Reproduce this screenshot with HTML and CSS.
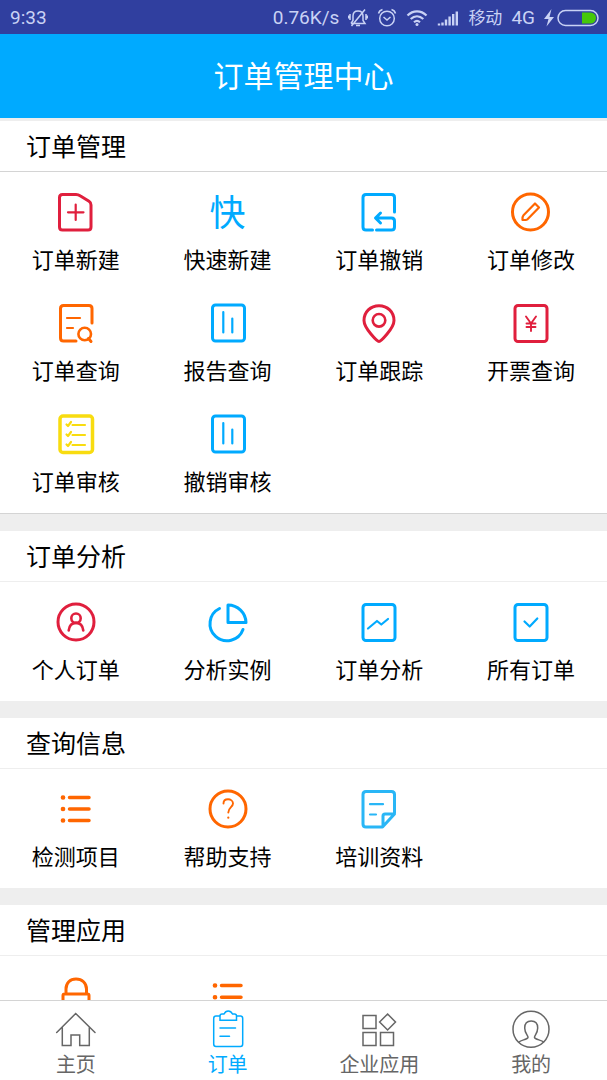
FILE: index.html
```html
<!DOCTYPE html>
<html lang="zh-CN">
<head>
<meta charset="utf-8">
<meta name="viewport" content="width=device-width, initial-scale=1">
<title>订单管理中心</title>
<link rel="stylesheet" href="styles.css">
</head>
<body>
<div class="app">
  <div class="status">
    <span class="status-time">9:33</span>
    <span class="status-speed">0.76K/s</span>
    <svg class="status-icon" width="20" height="20" viewBox="0 0 20 20"><path d="M3 15.500H17L15 12.500V8C15 5 13 3 10 3S5 5 5 8V12.500L3 15.500M8 17.500h4M3.500 18L17 1.500M2 6v6M.7 7.500v3M18 6v6M19.300 7.500v3"/></svg>
    <svg class="status-icon" width="20" height="20" viewBox="0 0 20 20"><circle cx="10" cy="10.500" r="7.300"/><path d="M6.500 9L10 12L13.500 9M1.500 5.500C2 3.500 3.500 2 5.500 1.500M18.500 5.500C18 3.500 16.500 2 14.500 1.500"/></svg>
    <svg class="status-icon" width="22" height="20" viewBox="0 0 22 20"><path stroke-width="2.200" d="M1.500 7.500C7 2 15 2 20.500 7.500M4.700 11C8.500 7.500 13.500 7.500 17.300 11M8 14.300C9.800 12.700 12.200 12.700 14 14.300"/><circle class="solid" cx="11" cy="16.500" r="1.500"/></svg>
    <svg class="status-icon signal" width="22" height="20" viewBox="0 0 22 20"><path stroke-width="2.400" d="M2 17.500v-2M5.500 17.500v-3M9 17.500v-6M12.600 17.500v-9M16.200 17.500v-11.500M19.800 17.500v-14"/></svg>
    <span class="status-carrier">移动</span>
    <span class="status-net">4G</span>
    <svg class="status-icon bolt" width="10" height="18" viewBox="0 0 10 18"><path class="solid" d="M7.500 0L0 10H4.500L2.500 17.500L10 8H5.500z"/></svg>
    <svg class="status-icon" width="42" height="18" viewBox="0 0 42 18"><rect x="1" y="1.500" width="40" height="15" rx="7.500"/><path class="charge" d="M25 3.500H33.500a5.500 5.500 0 0 1 0 11H25z"/></svg>
  </div>

  <header class="topbar"><h1 class="topbar-title">订单管理中心</h1></header>

  <main class="content">
    <section class="panel panel-first">
      <h2 class="panel-title">订单管理</h2>
      <div class="grid">
        <a class="item" href="#"><svg class="icon red" viewBox="0 0 40 40"><path d="M6.500 2.500H20C22 2.500 23 3 24.500 4L33 9.300C34.500 10.300 35 11.500 35 13V35Q35 38 32 38H6.500Q3.500 38 3.500 35V5.500Q3.500 2.500 6.500 2.500z"/><path class="thin" d="M12 20.300h15.500M19.700 12.500v15.500"/></svg><span class="label">订单新建</span></a>
        <a class="item" href="#"><span class="icon glyph">快</span><span class="label">快速新建</span></a>
        <a class="item" href="#"><svg class="icon blue" viewBox="0 0 40 40"><path d="M35.500 20V5.500Q35.500 2.500 32.500 2.500H7Q4 2.500 4 5.500V35Q4 38 7 38H13.500M17.500 38H32.500Q35.500 38 35.500 35V29Q35.500 26 32.500 26H17M21.500 21L16.500 26L21.500 31"/></svg><span class="label">订单撤销</span></a>
        <a class="item" href="#"><svg class="icon orange" viewBox="0 0 40 40"><circle cx="19.500" cy="20" r="18"/><path class="thin" d="M24 11.500L28 15.500L16.500 27.300Q15.500 28 11.500 28Q11.300 24.500 12.500 23.300z"/></svg><span class="label">订单修改</span></a>
        <a class="item" href="#"><svg class="icon orange" viewBox="0 0 40 40"><path d="M36 20V5.500Q36 2.500 33 2.500H7.500Q4.500 2.500 4.500 5.500V35Q4.500 38 7.500 38H20"/><path class="thin" d="M11 15h13M11 25h6"/><circle class="mid" cx="28.700" cy="31" r="6.300"/><path d="M32.500 35.500L35 38.500"/></svg><span class="label">订单查询</span></a>
        <a class="item" href="#"><svg class="icon blue" viewBox="0 0 40 40"><rect x="4.500" y="2" width="32" height="36" rx="3"/><path class="thin" d="M15.300 9v20.500M24.300 15.500v14"/></svg><span class="label">报告查询</span></a>
        <a class="item" href="#"><svg class="icon red" viewBox="0 0 40 40"><path d="M20 38.500C18.500 38.500 5 25.500 5 17.500C5 9 11.500 2.700 20 2.700S35 9 35 17.500C35 25.500 21.500 38.500 20 38.500z"/><circle class="mid" cx="20" cy="17.300" r="6.300"/></svg><span class="label">订单跟踪</span></a>
        <a class="item" href="#"><svg class="icon red" viewBox="0 0 40 40"><rect x="4" y="2.500" width="32" height="36" rx="3"/><path class="fine" d="M15 13.500L20 20.500L25 13.500M20 20.500V28M15.500 20.500h9M15.500 24h9"/></svg><span class="label">开票查询</span></a>
        <a class="item" href="#"><svg class="icon yellow" viewBox="0 0 40 40"><rect class="thick" x="4" y="2" width="32.500" height="36.500" rx="3"/><path class="thin" d="M16.500 11h12.500M16.500 21h12.500M16.500 31h12.500M10.500 10.500L12 12L15 8M10.500 20.500L12 22L15 18M10.500 30.500L12 32L15 28"/></svg><span class="label">订单审核</span></a>
        <a class="item" href="#"><svg class="icon blue" viewBox="0 0 40 40"><rect x="4.500" y="2" width="32" height="36" rx="3"/><path class="thin" d="M15.300 9v20.500M24.300 15.500v14"/></svg><span class="label">撤销审核</span></a>
      </div>
    </section>

    <section class="panel">
      <h2 class="panel-title">订单分析</h2>
      <div class="grid">
        <a class="item" href="#"><svg class="icon red" viewBox="0 0 40 40"><circle cx="20" cy="20" r="18"/><circle class="mid" cx="20" cy="16.200" r="4.700"/><path class="mid" d="M12.700 28.500C13.300 23.500 16 20.900 20 20.900S26.700 23.500 27.300 28.500"/></svg><span class="label">个人订单</span></a>
        <a class="item" href="#"><svg class="icon blue" viewBox="0 0 40 40"><path d="M20 3A18 18 0 0 1 38 20.500H20zM11.500 6.500A17 17 0 1 0 35 27.500"/></svg><span class="label">分析实例</span></a>
        <a class="item" href="#"><svg class="icon blue" viewBox="0 0 40 40"><rect x="4" y="2.500" width="32" height="36" rx="3"/><path class="thin" d="M9 26.500L18 19L22.300 22.500L29 17"/></svg><span class="label">订单分析</span></a>
        <a class="item" href="#"><svg class="icon blue" viewBox="0 0 40 40"><rect x="4" y="2.500" width="32" height="36" rx="3"/><path class="thin" d="M13.500 19.500L18.700 24.500L26.300 16.500"/></svg><span class="label">所有订单</span></a>
      </div>
    </section>

    <section class="panel">
      <h2 class="panel-title">查询信息</h2>
      <div class="grid">
        <a class="item" href="#"><svg class="icon orange" viewBox="0 0 40 40"><path class="thick" d="M13.500 8.500h19.500M13.500 20h19.500M13.500 31.500h19.500"/><path class="dots" d="M6.900 8.500h.2M6.900 20h.2M6.900 31.500h.2"/></svg><span class="label">检测项目</span></a>
        <a class="item" href="#"><svg class="icon orange" viewBox="0 0 40 40"><circle cx="20" cy="20" r="18"/><path class="fine" d="M15.500 14.500C15.500 11.500 17.500 10.300 20 10.300S25 12 25 14.500C25 18 20.300 18.500 20.300 23.500"/><path class="thin" d="M20.300 28.500v.2"/></svg><span class="label">帮助支持</span></a>
        <a class="item" href="#"><svg class="icon sky" viewBox="0 0 40 40"><path d="M35.500 24V5.500Q35.500 2.500 32.500 2.500H7Q4 2.500 4 5.500V35Q4 38 7 38H23.500L35.500 25H26Q24 25 24 27V37"/><path class="thin" d="M11 15.200h13M11 25.500h6"/></svg><span class="label">培训资料</span></a>
      </div>
    </section>

    <section class="panel">
      <h2 class="panel-title">管理应用</h2>
      <div class="grid">
        <a class="item" href="#"><svg class="icon orange" viewBox="0 0 40 40"><path d="M10 17.500V13C10 7 14 3 20 3S30.500 7 30.500 13V17.500M8.500 18H31.500Q33 18 33 19.500V36.500Q33 38 31.500 38H8.500Q7 38 7 36.500V19.500Q7 18 8.500 18zM19.900 26v5"/></svg></a>
        <a class="item" href="#"><svg class="icon orange" viewBox="0 0 40 40"><path class="thick" d="M13.500 9.500h19.500M13.500 21.200h19.500M13.500 32.800h19.500"/><path class="dots" d="M6.900 9.500h.2M6.900 21.200h.2M6.900 32.800h.2"/></svg></a>
      </div>
    </section>
  </main>

  <nav class="tabs">
    <a class="tab" href="#"><svg class="icon line" viewBox="0 0 40 40"><path d="M.7 22.500L19.700 3.500L39 22.500M6.300 17.500V35.500H15V25H23.700V35.500H33.300V17.500"/></svg><span class="tab-label">主页</span></a>
    <a class="tab tab-active" href="#" aria-current="page"><svg class="icon line" viewBox="0 0 40 40"><path d="M12 6H8Q5.700 6 5.700 8.500V34Q5.700 36.500 8 36.500H32.500Q34.700 36.500 34.700 34V8.500Q34.700 6 32.500 6H28.500M12 10.300V6Q12 4 14 4H16C17 2 18 1 20.200 1S23.500 2 24.500 4H26.500Q28.500 4 28.500 6V10.300zM12 18h15.500M12 26.300h9.500"/></svg><span class="tab-label">订单</span></a>
    <a class="tab" href="#"><svg class="icon line" viewBox="0 0 40 40"><path d="M4 5.500h13v13H4zM4 22.500h13v13H4zM21.500 22.500h13v13h-13zM28.600 4L36.500 12L28.600 20L20.600 12z"/></svg><span class="tab-label">企业应用</span></a>
    <a class="tab" href="#"><svg class="icon line" viewBox="0 0 40 40"><circle cx="20" cy="19.300" r="18"/><path d="M8 32C10 30 16.500 29.500 17 27.500C17.300 25.500 13.700 23.500 13.700 18C13.700 13.500 16.300 11 20.200 11S26.700 13.500 26.700 18C26.700 23.500 23.200 25.500 23.500 27.500C24 29.500 30.500 30 32.500 32"/></svg><span class="tab-label">我的</span></a>
  </nav>
</div>
</body>
</html>
```
FILE: styles.css
```css
* { box-sizing: border-box; }

body {
  margin: 0;
  font-family: "Noto Sans CJK SC", sans-serif;
  color: #000;
  background: #fff;
}

h1, h2 { margin: 0; font-weight: 400; }
a { color: inherit; text-decoration: none; }

.app {
  display: flex;
  flex-direction: column;
  height: 100vh;
}

/* Status bar */
.status {
  flex: none;
  display: flex;
  align-items: center;
  gap: 9px;
  height: 34px;
  padding: 1px 8px 0 10px;
  background: #303f9f;
  color: #c9d2f5;
  font: 19px/34px Roboto, "Noto Sans CJK SC", sans-serif;
}
.status-time { margin-right: auto; }
.status-carrier { font-size: 17px; }
.status-icon {
  flex: none;
  fill: none;
  stroke: #c9d2f5;
  stroke-width: 1.5;
}
.bolt { margin-right: -6px; }
.status-icon .solid { fill: #c9d2f5; stroke: none; }
.status-icon .charge { fill: #46c80a; stroke: none; }

/* Title bar */
.topbar {
  flex: none;
  padding-bottom: 4px;
  background: #00aaff;
  color: #fff;
  text-align: center;
}
.topbar-title { font-size: 30px; line-height: 80px; }

/* Scrolling content */
.content {
  flex: 1;
  min-height: 0;
  display: flex;
  flex-direction: column;
  gap: 17px;
  padding-top: 3px;
  overflow: hidden;
  background: #eee;
}
.panel { flex: none; background: #fff; }
.panel:last-child { flex: 1 0 auto; }
.panel-first { border-bottom: 1px solid #d4d4d4; }
.panel-title {
  height: 51px;
  padding-left: 26px;
  border-bottom: 1px solid #eee;
  font-size: 25px;
  line-height: 48px;
}
.panel-first .panel-title { border-color: #d4d4d4; }

.grid {
  display: grid;
  grid-template-columns: repeat(4, 1fr);
  padding-bottom: 8px;
}
.item {
  display: flex;
  flex-direction: column;
  align-items: center;
  gap: 12px;
  padding: 20px 0 11px;
}
.label { font-size: 22px; line-height: 28px; }

/* Icons */
.icon {
  width: 40px;
  height: 40px;
  overflow: visible;
  fill: none;
  stroke: currentColor;
  stroke-width: 3;
  stroke-linecap: round;
  stroke-linejoin: round;
}
.icon .dots { stroke-width: 4.5; }
.icon .thick { stroke-width: 3.5; }
.icon .mid { stroke-width: 2.6; }
.icon .thin { stroke-width: 2.2; }
.icon .fine { stroke-width: 1.9; }
.glyph {
  color: #00aaff;
  font-size: 36px;
  line-height: 36px;
  text-align: center;
}
.red { color: #e01f3d; }
.blue { color: #00aaff; }
.sky { color: #29b6f6; }
.orange { color: #ff6600; }
.yellow { color: #f8dc10; }
.line { stroke-width: 1.5; stroke-linejoin: miter; }

/* Bottom tabs */
.tabs {
  flex: none;
  display: grid;
  grid-template-columns: repeat(4, 1fr);
  border-top: 1px solid #d4d4d4;
  background: #fff;
}
.tab {
  display: flex;
  flex-direction: column;
  align-items: center;
  padding: 9px 0 2px;
  color: #666;
}
.tab-active { color: #00aaff; }
.tab-label { font-size: 20px; line-height: 28px; }
```
